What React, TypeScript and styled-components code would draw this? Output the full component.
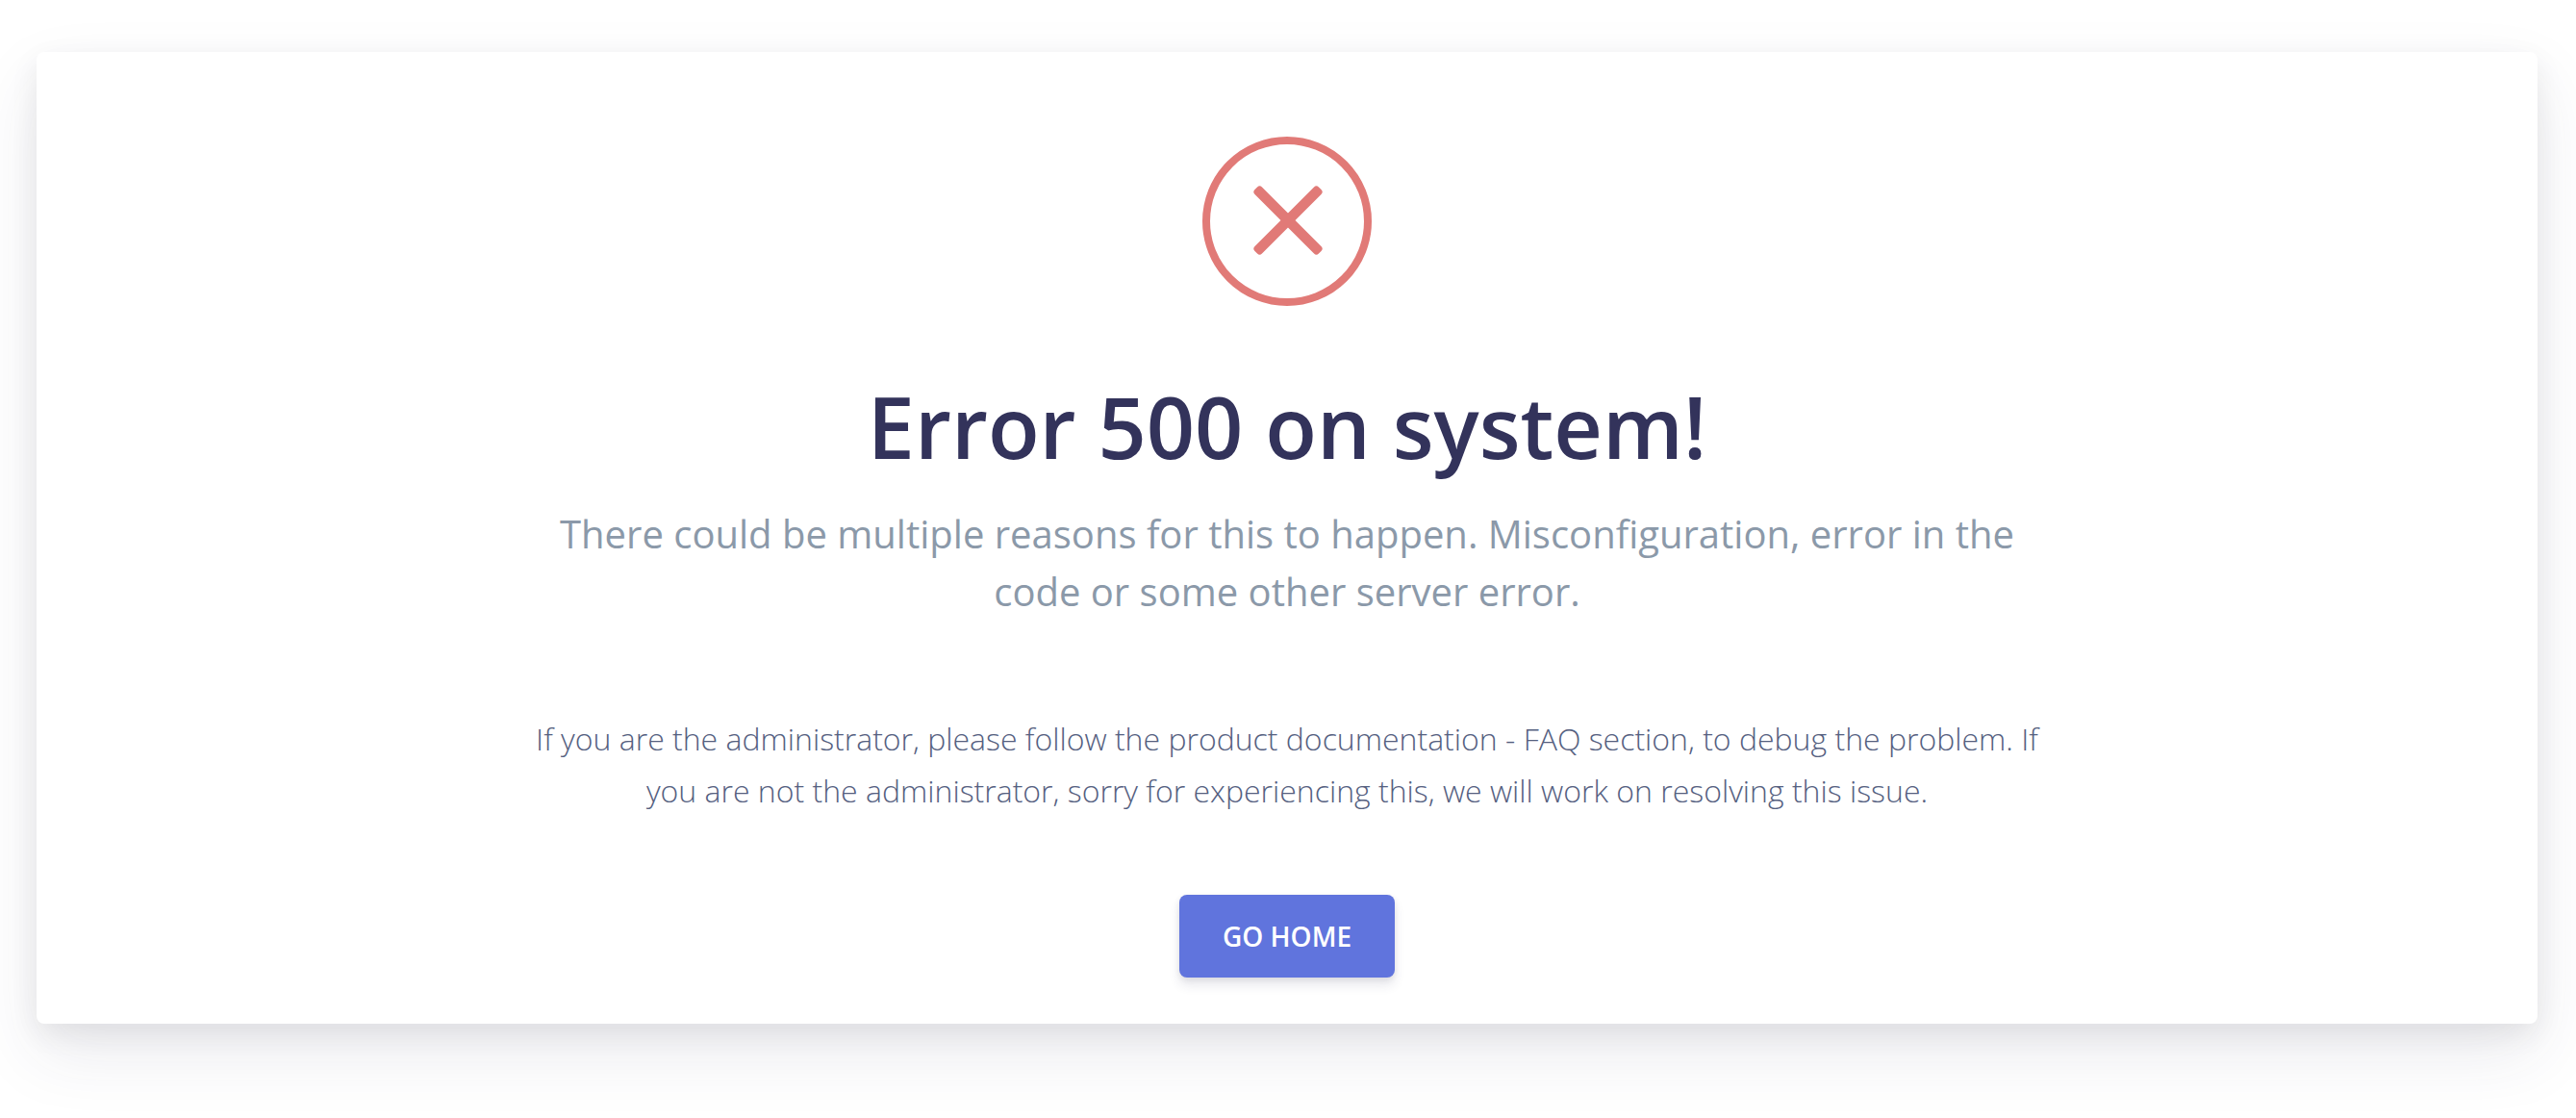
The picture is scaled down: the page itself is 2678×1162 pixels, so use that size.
import React from "react";
import styled, { createGlobalStyle } from "styled-components";

const GlobalStyle = createGlobalStyle`
  * { box-sizing: border-box; }
  body { margin: 0; background: #fff; font-family: "Open Sans", "Noto Sans", sans-serif; }
`;

const Page = styled.main`
  padding: 54px 40px 98px 38px;
  overflow: hidden;
`;

const Card = styled.section`
  display: flex;
  flex-direction: column;
  align-items: center;
  padding: 88px 32px 48px;
  border-radius: 8px;
  background: #fff;
  box-shadow: 0 30px 70px rgba(50, 50, 93, 0.1), 0 10px 30px rgba(0, 0, 0, 0.07);
  text-align: center;
`;

const ErrorIcon = styled.svg`
  width: 176px;
  height: 176px;
`;

const Title = styled.h1`
  margin: 65px 0 0;
  color: #33335b;
  font-size: 88px;
  font-weight: 600;
  line-height: 120px;
`;

const Lead = styled.p`
  max-width: 1600px;
  margin: 22px 0 0;
  color: #8b99a9;
  font-size: 40px;
  font-weight: 400;
  line-height: 60px;
`;

const Details = styled.p`
  max-width: 1600px;
  margin: 96px 0 0;
  color: #55607f;
  font-size: 32px;
  font-weight: 300;
  line-height: 54px;
`;

const HomeButton = styled.button`
  margin: 81px 0 0;
  padding: 22px 45px;
  border: 0;
  border-radius: 8px;
  background: #6074dd;
  box-shadow: 0 8px 12px rgba(50, 50, 93, 0.11), 0 2px 6px rgba(0, 0, 0, 0.08);
  color: #fff;
  font-family: inherit;
  font-size: 28px;
  font-weight: 600;
  line-height: 42px;
  text-transform: uppercase;
  cursor: pointer;
`;

export default function App() {
  return (
    <>
      <GlobalStyle />
      <Page>
        <Card>
          <ErrorIcon viewBox="0 0 176 176" aria-hidden="true">
            <circle cx="88" cy="88" r="84" fill="none" stroke="#e17a77" strokeWidth="8" />
            <g fill="#e17a77">
              <rect x="42" y="81.7" width="94" height="10.6" rx="3.5" transform="rotate(45 89 87)" />
              <rect x="42" y="81.7" width="94" height="10.6" rx="3.5" transform="rotate(-45 89 87)" />
            </g>
          </ErrorIcon>
          <Title>Error 500 on system!</Title>
          <Lead>
            There could be multiple reasons for this to happen. Misconfiguration, error in the code
            or some other server error.
          </Lead>
          <Details>
            If you are the administrator, please follow the product documentation - FAQ section, to
            debug the problem. If you are not the administrator, sorry for experiencing this, we
            will work on resolving this issue.
          </Details>
          <HomeButton type="button">Go home</HomeButton>
        </Card>
      </Page>
    </>
  );
}
